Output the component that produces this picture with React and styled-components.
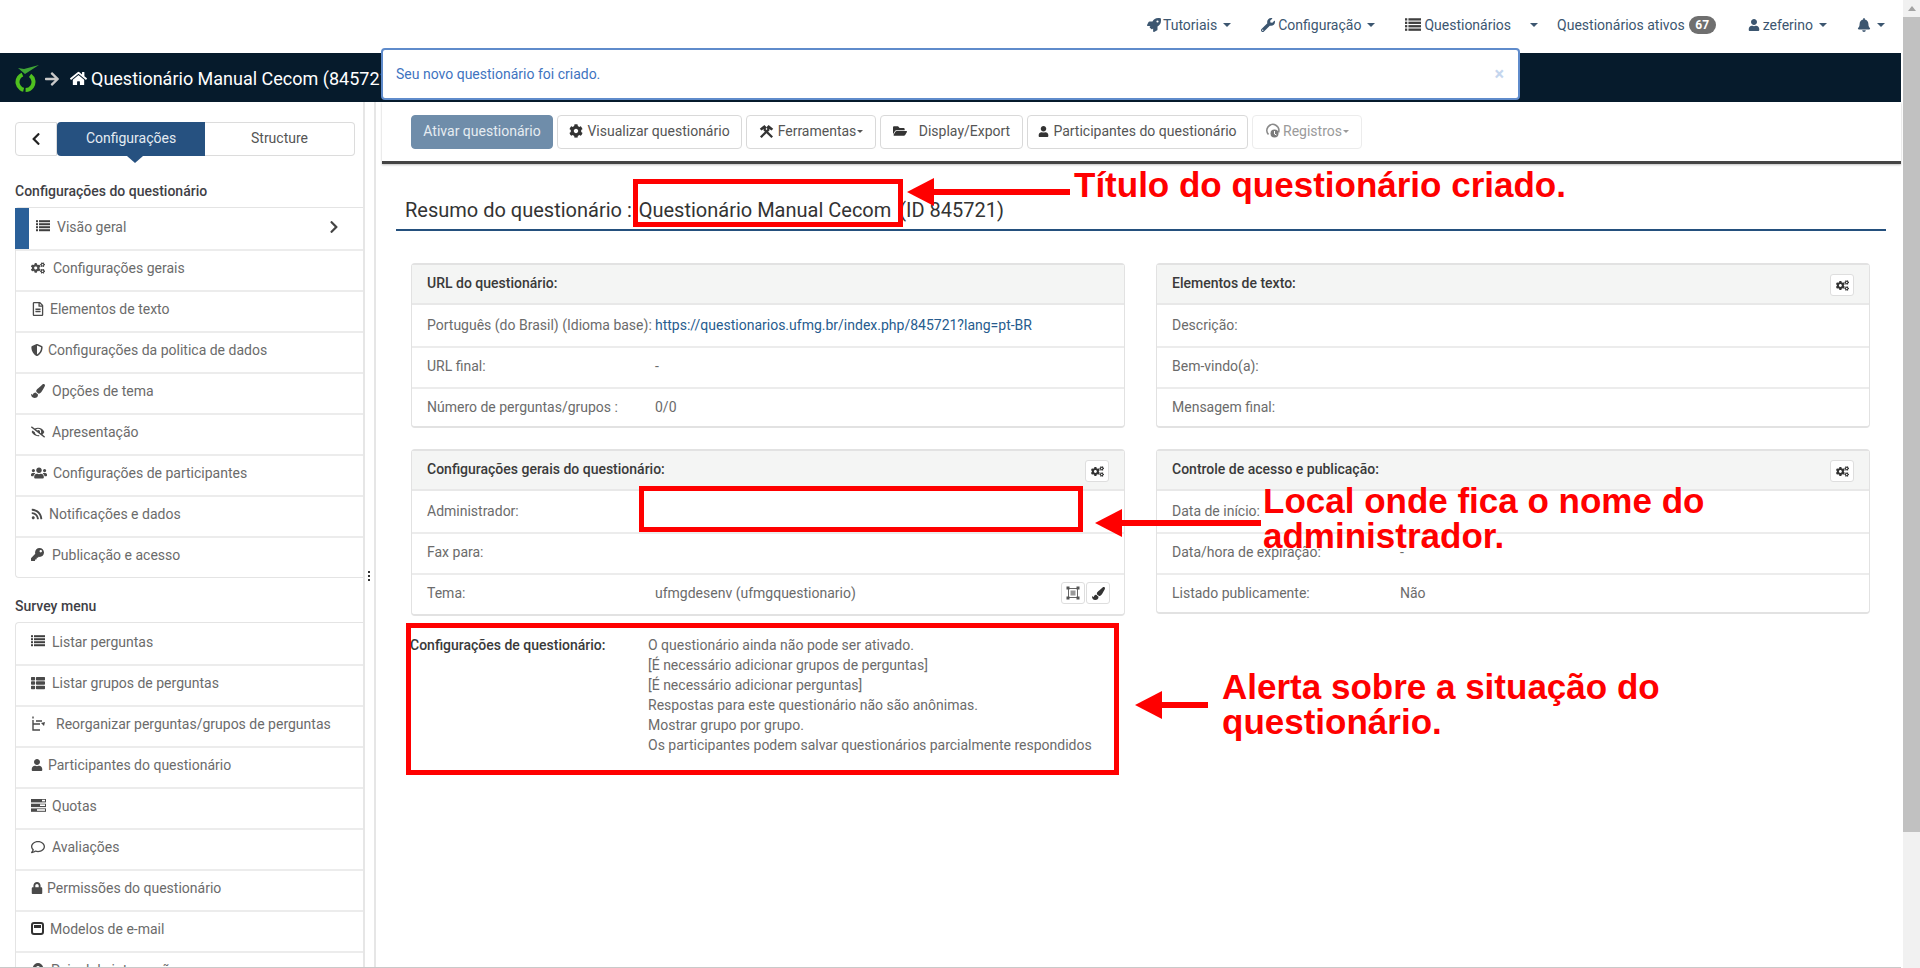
import React from "react";
import styled, { createGlobalStyle } from "styled-components";
import {
  FaRocket, FaWrench, FaUser, FaBell, FaCog, FaCogs, FaHome, FaArrowRight, FaChevronLeft,
  FaChevronRight, FaRegFileAlt, FaPaintBrush, FaEyeSlash, FaUsers, FaRss, FaKey, FaThList, FaLock,
  FaRegComment, FaFolderOpen, FaShieldAlt, FaMapMarkerAlt,
} from "react-icons/fa";

const Global = createGlobalStyle`
  html, body { margin: 0; padding: 0; height: 968px; overflow: hidden; background: #fff; }
  body { font-family: Roboto, "Liberation Sans", sans-serif; font-size: 14px; color: #6b6b6b; }
  * { box-sizing: border-box; }
`;

const Shell = styled.div`
  position: relative;
  display: flex;
  width: 1920px;
  height: 968px;
  overflow: hidden;
`;
const Page = styled.div`
  width: 1901px;
  display: flex;
  flex-direction: column;
  border-bottom: 1px solid #c9c9c9;
`;
const Scrollbar = styled.div`
  margin-left: 2px;
  width: 17px;
  background: #f1f1f1;
  display: flex;
  flex-direction: column;
`;
const ScrollArrow = styled.div`
  height: 17px;
  display: flex;
  align-items: center;
  justify-content: center;
  &::before {
    content: "";
    border-left: 4px solid transparent;
    border-right: 4px solid transparent;
    border-bottom: 5px solid #a3a3a3;
  }
`;
const ScrollThumb = styled.div`
  height: 815px;
  background: #c1c1c1;
`;

const TopNav = styled.nav`
  height: 53px;
  flex: none;
  display: flex;
  align-items: center;
  justify-content: flex-end;
  padding: 0 16px 4px 0;
  color: #3c5670;
  background: #fff;
`;
const NavItem = styled.div`
  display: flex;
  align-items: center;
  margin-left: ${(p) => p.$ml || 0}px;
  white-space: nowrap;
  svg { flex: none; margin-right: ${(p) => p.$iconGap ?? 3}px; font-size: ${(p) => p.$icon || 14}px; }
`;
const Caret = styled.span`
  display: inline-block;
  margin-left: ${(p) => p.$ml || 6}px;
  border-left: 4px solid transparent;
  border-right: 4px solid transparent;
  border-top: 4px solid currentColor;
`;
const Badge = styled.span`
  margin-left: 4px;
  min-width: 27px;
  height: 18px;
  border-radius: 10px;
  background: #6f6f6f;
  color: #fff;
  font-size: 12px;
  font-weight: 700;
  display: flex;
  align-items: center;
  justify-content: center;
`;

const DarkBar = styled.header`
  height: 49px;
  flex: none;
  background: #061b2c;
  color: #fff;
  display: flex;
  align-items: center;
  padding: 2px 0 0 15px;
  font-size: 18px;
  white-space: nowrap;
  overflow: hidden;
`;
const BarTitle = styled.span`
  margin-top: -1px;
`;
const BarArrow = styled(FaArrowRight)`
  margin: 0 10px 0 5px;
  font-size: 16px;
  color: #c9c9c9;
`;
const BarHome = styled(FaHome)`
  margin-right: 4px;
  font-size: 17px;
`;

const Flash = styled.div`
  position: absolute;
  left: 381px;
  top: 48px;
  width: 1139px;
  height: 52px;
  background: #fff;
  border: 2px solid #5f8bcb;
  border-radius: 4px;
  color: #3f74bf;
  display: flex;
  align-items: center;
  justify-content: space-between;
  padding: 0 14px 1px 13px;
`;
const FlashClose = styled.span`
  color: #c5d6ee;
  font-size: 18px;
  font-weight: 700;
`;

const Body = styled.div`
  flex: 1;
  min-height: 0;
  display: flex;
`;
const Sidebar = styled.aside`
  width: 363px;
  flex: none;
  padding: 20px 0 0 15px;
  overflow: hidden;
`;
const TabStrip = styled.div`
  display: flex;
  height: 34px;
  width: 340px;
`;
const BackButton = styled.div`
  width: 42px;
  border: 1px solid #dcdcdc;
  border-radius: 4px 0 0 4px;
  display: flex;
  align-items: center;
  justify-content: center;
  color: #222;
  font-size: 14px;
`;
const Tab = styled.div`
  position: relative;
  width: ${(p) => p.$w}px;
  display: flex;
  align-items: center;
  justify-content: center;
  padding-bottom: 2px;
  background: ${(p) => (p.$active ? "#265180" : "#fff")};
  color: ${(p) => (p.$active ? "#e4ebf2" : "#555")};
  border: ${(p) => (p.$active ? "none" : "1px solid #dcdcdc")};
  border-left: none;
  border-radius: ${(p) => (p.$active ? "4px 0 0 4px" : "0 4px 4px 0")};
  ${(p) => p.$active && `
    &::after {
      content: "";
      position: absolute;
      left: 70px;
      bottom: -7px;
      border-left: 8px solid transparent;
      border-right: 8px solid transparent;
      border-top: 7px solid #265180;
    }
  `}
`;
const SideTitle = styled.div`
  font-weight: 500;
  color: #3f3f46;
  line-height: 20px;
  margin-top: ${(p) => p.$mt}px;
  margin-bottom: ${(p) => p.$mb}px;
`;
const Menu = styled.div`
  border: 1px solid #e4e4e4;
  border-right: none;
  border-radius: 4px 0 0 4px;
`;
const MenuRow = styled.div`
  position: relative;
  height: 41px;
  display: flex;
  align-items: center;
  white-space: nowrap;
  color: #6b6b6b;
  border-top: 2px solid ${(p) => (p.$first ? "transparent" : "#ececec")};
  padding: 0 0 6px ${(p) => (p.$active ? 20 : 15)}px;
  ${(p) => p.$active && `
    &::before {
      content: "";
      position: absolute;
      left: -1px;
      top: -2px;
      bottom: 0;
      width: 14px;
      background: #2a6099;
    }
  `}
`;
const MenuIcon = styled.span`
  width: ${(p) => p.$w}px;
  flex: none;
  display: flex;
  align-items: center;
  color: #4a4a4a;
  font-size: 14px;
`;
const MenuChevron = styled(FaChevronRight)`
  position: absolute;
  right: 22px;
  font-size: 14px;
  color: #444;
`;
const Gutter = styled.div`
  width: 13px;
  flex: none;
  border-left: 2px solid #e6e6e6;
  border-right: 2px solid #e6e6e6;
  position: relative;
`;
const GutterDots = styled.div`
  position: absolute;
  left: 3px;
  top: 469px;
  width: 2px;
  height: 10px;
  background: repeating-linear-gradient(#333 0 2px, transparent 2px 4px);
`;

const Main = styled.main`
  flex: 1;
  min-width: 0;
  padding-left: 6px;
`;
const Toolbar = styled.div`
  height: 62px;
  padding: 13px 0 0 29px;
  display: flex;
  gap: 4px;
  align-items: flex-start;
  border-bottom: 3px solid #444;
  box-shadow: 0 1px 2px rgba(0, 0, 0, 0.25);
`;
const ToolButton = styled.div`
  width: ${(p) => p.$w}px;
  height: 34px;
  padding-bottom: 2px;
  border: 1px solid ${(p) => (p.$primary ? "#6f8daa" : p.$disabled ? "#ececec" : "#d9d9d9")};
  border-radius: 4px;
  background: ${(p) => (p.$primary ? "#6f8daa" : "#fff")};
  color: ${(p) => (p.$primary ? "#e6ecf1" : p.$disabled ? "#9a9a9a" : "#555")};
  display: flex;
  align-items: center;
  justify-content: center;
  white-space: nowrap;
  svg { font-size: ${(p) => p.$icon || 14}px; color: ${(p) => (p.$disabled ? "#8a8a8a" : "#333")}; margin-right: ${(p) => p.$iconGap ?? 4}px; flex: none; }
`;
const TinyCaret = styled.span`
  border-left: 3.5px solid transparent;
  border-right: 3.5px solid transparent;
  border-top: 3.5px solid currentColor;
  margin-left: 1px;
`;
const Heading = styled.h1`
  margin: 0 15px 0 14px;
  height: 67px;
  padding: 0 0 4px 9px;
  display: flex;
  align-items: flex-end;
  font-size: 20px;
  font-weight: 400;
  line-height: 30px;
  color: #333;
  border-bottom: 2px solid #24507d;
  white-space: pre;
`;
const HeadingName = styled.span`
  margin: 0 -2px 0 2px;
`;
const CardGrid = styled.div`
  margin: 32px 31px 0 29px;
  display: grid;
  grid-template-columns: 714px 714px;
  column-gap: 31px;
  row-gap: 21px;
  align-items: start;
`;
const Card = styled.section`
  border: 1px solid #e2e2e2;
  border-top-width: 2px;
  border-bottom-width: 2px;
  border-radius: 4px;
  background: #fff;
`;
const CardHead = styled.div`
  position: relative;
  height: 40px;
  background: #f4f5f4;
  border-bottom: 2px solid #e8e8e8;
  display: flex;
  align-items: center;
  padding: 0 15px 2px;
  font-weight: 500;
  color: #3a3a3a;
`;
const IconButton = styled.span`
  width: 24px;
  height: 22px;
  border: 1px solid #dedede;
  border-radius: 3px;
  background: #fff;
  display: flex;
  align-items: center;
  justify-content: center;
  color: #333;
  font-size: 13px;
`;
const HeadAction = styled.div`
  position: absolute;
  right: 15px;
  top: 9px;
`;
const CardRow = styled.div`
  position: relative;
  height: ${(p) => (p.$short ? 39 : 41)}px;
  padding: 0 15px;
  display: grid;
  grid-template-columns: 228px 1fr;
  align-items: start;
  line-height: 36px;
  border-top: 2px solid ${(p) => (p.$first ? "transparent" : "#ececec")};
  color: #6b6b6b;
`;
const Link = styled.span`
  color: #275c8e;
  white-space: nowrap;
`;
const RowActions = styled.div`
  position: absolute;
  right: 14px;
  top: 7px;
  display: flex;
  gap: 1px;
`;
const Summary = styled.div`
  margin: 19px 0 0 28px;
  display: flex;
  line-height: 20px;
`;
const SummaryLabel = styled.div`
  width: 238px;
  flex: none;
  font-weight: 500;
  color: #3a3a3a;
`;

const RedBox = styled.div`
  position: absolute;
  left: ${(p) => p.$x}px;
  top: ${(p) => p.$y}px;
  width: ${(p) => p.$w}px;
  height: ${(p) => p.$h}px;
  border: 5px solid #f00;
  pointer-events: none;
`;
const RedNote = styled.div`
  position: absolute;
  left: ${(p) => p.$x}px;
  top: ${(p) => p.$y}px;
  color: #f00;
  font: 700 35px/35px "Liberation Sans", Arial, sans-serif;
  white-space: nowrap;
`;
const ArrowSvg = styled.svg`
  position: absolute;
  left: ${(p) => p.$x}px;
  top: ${(p) => p.$y}px;
`;

const Arrow = ({ x, y, w }) => (
  <ArrowSvg $x={x} $y={y} width={w} height={28} viewBox={`0 0 ${w} 28`}>
    <polygon points="0,14 27,0 27,28" fill="#f00" />
    <rect x="26" y="11" width={w - 26} height="6" fill="#f00" />
  </ArrowSvg>
);

const Logo = () => (
  <svg width="26" height="27" viewBox="0 0 26 27" style={{ flex: "none", marginRight: "-2px" }}>
    <circle
      cx="10.5" cy="17" r="8" fill="none" stroke="#4fc01f" strokeWidth="4"
      strokeDasharray="20 2 20 8.3" transform="rotate(-55 10.5 17)"
    />
    <polygon points="3,3 9,4 24,0 10,9" fill="#3fa535" />
  </svg>
);
const ListIcon = ({ w = 14 }) => (
  <svg width={w} height={w * 0.86} viewBox="0 0 14 12" fill="#3f3f3f">
    {[0, 3, 6, 9].map((y) => (
      <g key={y}>
        <rect x="0" y={y + 0.2} width="2" height="2" />
        <rect x="3" y={y + 0.2} width="11" height="2" />
      </g>
    ))}
  </svg>
);
const ReorderIcon = () => (
  <svg width="15" height="15" viewBox="0 0 15 15">
    <path d="M2 0.5v2M2 4v10h7M2 8h7M5 5h6" fill="none" stroke="#4a4a4a" strokeWidth="1.4" />
    <path d="M10 7l4-1-1 4z" fill="#4a4a4a" />
  </svg>
);
const QuotaIcon = () => (
  <svg width="15" height="13" viewBox="0 0 15 13">
    <rect x="0" y="0" width="15" height="3.4" fill="#4a4a4a" />
    <rect x="0" y="4.7" width="15" height="3.4" fill="#4a4a4a" />
    <rect x="0" y="9.4" width="15" height="3.4" fill="#4a4a4a" />
    <rect x="9" y="5.4" width="5" height="1.6" fill="#fff" />
    <rect x="6" y="10.2" width="8" height="1.6" fill="#fff" />
    <rect x="11" y="0.8" width="3" height="1.6" fill="#fff" />
  </svg>
);
const MailIcon = () => (
  <svg width="13" height="13" viewBox="0 0 13 13">
    <rect x="1" y="1" width="11" height="11" rx="2" fill="none" stroke="#333" strokeWidth="2" />
    <rect x="3" y="3" width="7" height="3" fill="#333" />
  </svg>
);
const LogsIcon = () => (
  <svg width="16" height="16" viewBox="0 0 16 16">
    <path d="M3.5 11.5A6 6 0 1 1 13.5 9.5" fill="none" stroke="#8a8a8a" strokeWidth="1.7" />
    <circle cx="9.5" cy="10.5" r="4" fill="#7a7a7a" />
    <path d="M9.5 8v3l2 1" fill="none" stroke="#fff" strokeWidth="1" />
  </svg>
);
const HammersIcon = () => (
  <svg width="15" height="15" viewBox="0 0 15 15" fill="#333">
    <path d="M2.6 14 1 12.4 9 4.6l1.6 1.6z" />
    <path d="M12.4 14 14 12.4 6 4.6 4.4 6.2z" />
    <path d="M7.2 3.6 9.6 1l4.6 3.8-1.6 1.8-2-1.4-1 1z" />
    <path d="M7.8 3.6 5.4 1 .8 4.8l1.6 1.8 2-1.4 1 1z" />
  </svg>
);
const TemplateIcon = () => (
  <svg width="14" height="14" viewBox="0 0 14 14" fill="none" stroke="#666">
    <rect x="2.5" y="2.5" width="9" height="9" strokeWidth="1" />
    <rect x="4.5" y="4.5" width="5" height="5" fill="#999" stroke="none" />
    <g fill="#555" stroke="none">
      <rect x="0.5" y="0.5" width="3" height="3" />
      <rect x="10.5" y="0.5" width="3" height="3" />
      <rect x="0.5" y="10.5" width="3" height="3" />
      <rect x="10.5" y="10.5" width="3" height="3" />
    </g>
  </svg>
);

const settingsMenu = [
  { icon: <ListIcon />, w: 21, label: "Visão geral", active: true, chevron: true },
  { icon: <FaCogs />, w: 22, label: "Configurações gerais" },
  { icon: <FaRegFileAlt />, w: 19, label: "Elementos de texto" },
  { icon: <FaShieldAlt size={12} />, w: 17, label: "Configurações da politica de dados" },
  { icon: <FaPaintBrush />, w: 21, label: "Opções de tema" },
  { icon: <FaEyeSlash />, w: 21, label: "Apresentação" },
  { icon: <FaUsers size={16} />, w: 22, label: "Configurações de participantes" },
  { icon: <FaRss size={12} />, w: 18, label: "Notificações e dados" },
  { icon: <FaKey size={13} />, w: 21, label: "Publicação e acesso" },
];
const surveyMenu = [
  { icon: <ListIcon />, w: 21, label: "Listar perguntas" },
  { icon: <FaThList />, w: 21, label: "Listar grupos de perguntas" },
  { icon: <ReorderIcon />, w: 25, label: "Reorganizar perguntas/grupos de perguntas" },
  { icon: <FaUser size={12} />, w: 17, label: "Participantes do questionário" },
  { icon: <QuotaIcon />, w: 21, label: "Quotas" },
  { icon: <FaRegComment />, w: 21, label: "Avaliações" },
  { icon: <FaLock size={12} />, w: 16, label: "Permissões do questionário" },
  { icon: <MailIcon />, w: 19, label: "Modelos de e-mail" },
  { icon: <FaMapMarkerAlt />, w: 20, label: "Painel de integração" },
];

const MenuList = ({ items }) => (
  <Menu>
    {items.map((it, i) => (
      <MenuRow key={it.label} $first={i === 0} $active={it.active}>
        <MenuIcon $w={it.w}>{it.icon}</MenuIcon>
        {it.label}
        {it.chevron && <MenuChevron />}
      </MenuRow>
    ))}
  </Menu>
);

const InfoCard = ({ title, action, rows }) => (
  <Card>
    <CardHead>
      {title}
      {action && (
        <HeadAction>
          <IconButton><FaCogs /></IconButton>
        </HeadAction>
      )}
    </CardHead>
    {rows.map((r, i) => (
      <CardRow key={r.label} $first={i === 0} $short={i === rows.length - 1 && !r.actions}>
        <span>{r.label}</span>
        <span>{r.value}</span>
        {r.actions && (
          <RowActions>
            <IconButton><TemplateIcon /></IconButton>
            <IconButton><FaPaintBrush /></IconButton>
          </RowActions>
        )}
      </CardRow>
    ))}
  </Card>
);

const summaryLines = [
  "O questionário ainda não pode ser ativado.",
  "[É necessário adicionar grupos de perguntas]",
  "[É necessário adicionar perguntas]",
  "Respostas para este questionário não são anônimas.",
  "Mostrar grupo por grupo.",
  "Os participantes podem salvar questionários parcialmente respondidos",
];

export default function App() {
  return (
    <Shell>
      <Global />
      <Page>
        <TopNav>
          <NavItem $iconGap={2}><FaRocket />Tutoriais<Caret /></NavItem>
          <NavItem $ml={30}><FaWrench />Configuração<Caret /></NavItem>
          <NavItem $ml={30} $iconGap={3}><ListIcon w={16} />Questionários<Caret $ml={19} /></NavItem>
          <NavItem $ml={19}>Questionários ativos<Badge>67</Badge></NavItem>
          <NavItem $ml={32} $icon={12}><FaUser />zeferino<Caret /></NavItem>
          <NavItem $ml={30}><FaBell />
            <Caret $ml={3} />
          </NavItem>
        </TopNav>
        <DarkBar>
          <Logo />
          <BarArrow />
          <BarHome />
          <BarTitle>Questionário Manual Cecom (845721)</BarTitle>
        </DarkBar>
        <Body>
          <Sidebar>
            <TabStrip>
              <BackButton><FaChevronLeft /></BackButton>
              <Tab $active $w={148}>Configurações</Tab>
              <Tab $w={150}>Structure</Tab>
            </TabStrip>
            <SideTitle $mt={25} $mb={6}>Configurações do questionário</SideTitle>
            <MenuList items={settingsMenu} />
            <SideTitle $mt={18} $mb={6}>Survey menu</SideTitle>
            <MenuList items={surveyMenu} />
          </Sidebar>
          <Gutter><GutterDots /></Gutter>
          <Main>
            <Toolbar>
              <ToolButton $primary $w={142}>Ativar questionário</ToolButton>
              <ToolButton $w={185}><FaCog />Visualizar questionário</ToolButton>
              <ToolButton $w={130}><HammersIcon />Ferramentas<TinyCaret /></ToolButton>
              <ToolButton $w={143} $iconGap={12}><FaFolderOpen />Display/Export</ToolButton>
              <ToolButton $w={221} $icon={11}><FaUser />Participantes do questionário</ToolButton>
              <ToolButton $w={110} $disabled $iconGap={2}><LogsIcon />Registros<TinyCaret /></ToolButton>
            </Toolbar>
            <Heading>Resumo do questionário : <HeadingName>Questionário Manual Cecom</HeadingName>  (ID 845721)</Heading>
            <CardGrid>
              <InfoCard
                title="URL do questionário:"
                rows={[
                  { label: "Português (do Brasil) (Idioma base):", value: <Link>https://questionarios.ufmg.br/index.php/845721?lang=pt-BR</Link> },
                  { label: "URL final:", value: "-" },
                  { label: "Número de perguntas/grupos :", value: "0/0" },
                ]}
              />
              <InfoCard
                title="Elementos de texto:"
                action
                rows={[
                  { label: "Descrição:", value: "" },
                  { label: "Bem-vindo(a):", value: "" },
                  { label: "Mensagem final:", value: "" },
                ]}
              />
              <InfoCard
                title="Configurações gerais do questionário:"
                action
                rows={[
                  { label: "Administrador:", value: "" },
                  { label: "Fax para:", value: "" },
                  { label: "Tema:", value: "ufmgdesenv (ufmgquestionario)", actions: true },
                ]}
              />
              <InfoCard
                title="Controle de acesso e publicação:"
                action
                rows={[
                  { label: "Data de início:", value: "" },
                  { label: "Data/hora de expiração:", value: "-" },
                  { label: "Listado publicamente:", value: "Não" },
                ]}
              />
            </CardGrid>
            <Summary>
              <SummaryLabel>Configurações de questionário:</SummaryLabel>
              <div>{summaryLines.map((l) => <div key={l}>{l}</div>)}</div>
            </Summary>
          </Main>
        </Body>
      </Page>
      <Scrollbar>
        <ScrollArrow />
        <ScrollThumb />
      </Scrollbar>

      <Flash>Seu novo questionário foi criado.<FlashClose>×</FlashClose></Flash>

      <RedBox $x={633} $y={179} $w={270} $h={48} />
      <Arrow x={907} y={178} w={163} />
      <RedNote $x={1074} $y={167}>Título do questionário criado.</RedNote>

      <RedBox $x={639} $y={486} $w={444} $h={46} />
      <Arrow x={1095} y={509} w={166} />
      <RedNote $x={1263} $y={483}>Local onde fica o nome do<br />administrador.</RedNote>

      <RedBox $x={406} $y={623} $w={713} $h={152} />
      <Arrow x={1135} y={691} w={73} />
      <RedNote $x={1222} $y={669}>Alerta sobre a situação do<br />questionário.</RedNote>
    </Shell>
  );
}
